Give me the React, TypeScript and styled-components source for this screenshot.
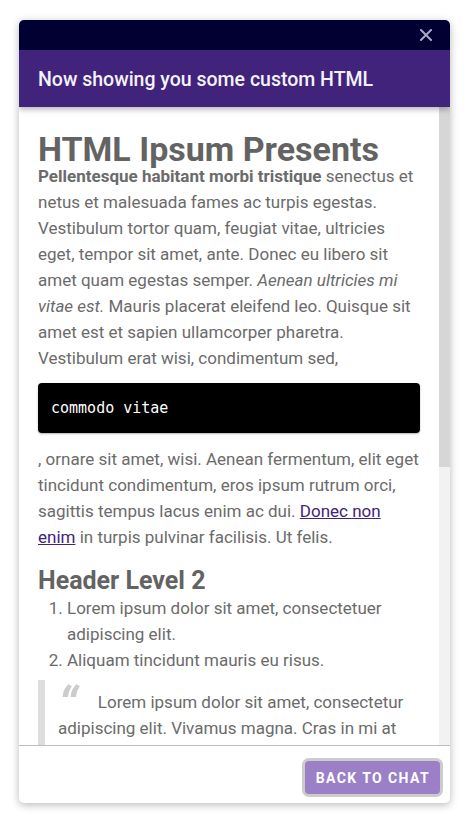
import * as React from "react";
import styled, { createGlobalStyle } from "styled-components";

const GlobalStyle = createGlobalStyle`
  html, body {
    margin: 0;
    padding: 0;
    background: #ffffff;
  }
  body {
    font-family: Roboto, "Liberation Sans", Arial, sans-serif;
  }
`;

// thumb size as the page's scroll ratio shows it
const thumbHeight = 360;

const App: React.FC = () => {
  return (
    <>
      <GlobalStyle />
      <Page>
        <Widget>
          <TopBar>
            <CloseButton aria-label="Close">
              <svg width="12" height="12" viewBox="0 0 12 12">
                <path
                  d="M1 1 L11 11 M11 1 L1 11"
                  stroke="#a9a9c4"
                  strokeWidth="2"
                  strokeLinecap="square"
                />
              </svg>
            </CloseButton>
          </TopBar>
          <Header>
            <Title>Now showing you some custom HTML</Title>
          </Header>
          <Body>
            <Content>
              <H1>HTML Ipsum Presents</H1>
              <P>
                <strong>Pellentesque habitant morbi tristique</strong> senectus
                et netus et malesuada fames ac turpis egestas. Vestibulum tortor
                quam, feugiat vitae, ultricies eget, tempor sit amet, ante. Donec
                eu libero sit amet quam egestas semper.{" "}
                <em>Aenean ultricies mi vitae est.</em> Mauris placerat eleifend
                leo. Quisque sit amet est et sapien ullamcorper pharetra.
                Vestibulum erat wisi, condimentum sed,
              </P>
              <Code>commodo vitae</Code>
              <P>
                , ornare sit amet, wisi. Aenean fermentum, elit eget tincidunt
                condimentum, eros ipsum rutrum orci, sagittis tempus lacus enim
                ac dui. <Link href="#">Donec non enim</Link> in turpis pulvinar
                facilisis. Ut felis.
              </P>
              <H2>Header Level 2</H2>
              <OrderedList>
                <li>Lorem ipsum dolor sit amet, consectetuer adipiscing elit.</li>
                <li>Aliquam tincidunt mauris eu risus.</li>
              </OrderedList>
              <Quote>
                <p>
                  Lorem ipsum dolor sit amet, consectetur adipiscing elit.
                  Vivamus magna. Cras in mi at felis aliquet congue. Ut a est
                  eget ligula molestie gravida. Curabitur massa. Donec eleifend,
                  libero at sagittis mollis, tellus est malesuada tellus, at
                  luctus turpis elit sit amet quam. Vivamus pretium ornare est.
                </p>
              </Quote>
              <H3>Header Level 3</H3>
              <BulletList>
                <li>Lorem ipsum dolor sit amet, consectetuer adipiscing elit.</li>
                <li>Aliquam tincidunt mauris eu risus.</li>
              </BulletList>
            </Content>
            <ScrollTrack>
              <ScrollThumb style={{ height: thumbHeight }} />
            </ScrollTrack>
          </Body>
          <Footer>
            <BackButton>Back to chat</BackButton>
          </Footer>
        </Widget>
      </Page>
    </>
  );
};

const Page = styled.div`
  padding: 20px 14px 13px 19px;
`;

const Widget = styled.div`
  width: 431px;
  height: 783px;
  display: flex;
  flex-direction: column;
  background: #ffffff;
  border-radius: 5px;
  overflow: hidden;
  box-shadow: 0 2px 8px rgba(0, 0, 0, 0.28);
`;

const TopBar = styled.div`
  height: 30px;
  flex: none;
  background: #000033;
  display: flex;
  align-items: center;
  justify-content: flex-end;
  padding-right: 18px;
`;

const CloseButton = styled.button`
  border: none;
  background: transparent;
  padding: 0;
  display: flex;
  cursor: pointer;
`;

const Header = styled.div`
  height: 57px;
  flex: none;
  background: #41237c;
  display: flex;
  align-items: center;
  padding: 0 19px;
  box-shadow: 0 3px 5px rgba(0, 0, 0, 0.25);
  position: relative;
  z-index: 1;
`;

const Title = styled.h2`
  margin: 0;
  color: #f4f2f8;
  font-size: 19.5px;
  font-weight: 500;
  padding-top: 1px;
`;

const Body = styled.div`
  flex: 1;
  min-height: 0;
  display: flex;
`;

const Content = styled.div`
  flex: 1;
  min-width: 0;
  overflow: hidden;
  padding: 28px 19px 20px 19px;
  color: #6b6b6b;
  font-size: 17px;
  font-weight: 400;
  line-height: 26px;

  strong {
    font-weight: 700;
  }
`;

const ScrollTrack = styled.div`
  width: 11px;
  flex: none;
  background: #f2f2f2;
`;

const ScrollThumb = styled.div`
  width: 100%;
  background: #d6d6d6;
`;

const H1 = styled.h1`
  margin: 0;
  font-size: 34px;
  line-height: 28px;
  font-weight: 700;
  color: #636363;
`;

const P = styled.p`
  margin: 0;
`;

const Code = styled.pre`
  margin: 12px 0 13px;
  background: #000000;
  color: #ffffff;
  border-radius: 4px;
  padding: 12px 13px;
  height: 26px;
  font-family: "DejaVu Sans Mono", "Liberation Mono", monospace;
  font-size: 15px;
  font-weight: 400;
  line-height: 26px;
  box-shadow: 0 1px 2px rgba(0, 0, 0, 0.3);
`;

const Link = styled.a`
  color: #41237c;
  text-decoration: underline;
`;

const H2 = styled.h2`
  margin: 17px 0 0;
  font-size: 25px;
  line-height: 28px;
  font-weight: 700;
  color: #636363;
`;

const H3 = styled.h3`
  margin: 16px 0 0;
  font-size: 21px;
  line-height: 26px;
  font-weight: 700;
  color: #636363;
`;

const OrderedList = styled.ol`
  margin: 0;
  padding-left: 29px;
`;

const BulletList = styled.ul`
  margin: 0;
  padding-left: 29px;
`;

const Quote = styled.blockquote`
  margin: 7px 0 0;
  border-left: 7px solid #dddddd;
  padding: 9px 0 4px 13px;

  p {
    margin: 0;
  }

  p::before {
    content: "\\201C";
    font-family: Roboto, "Liberation Sans", sans-serif;
    font-style: italic;
    font-weight: 700;
    font-size: 50px;
    color: #cccccc;
    line-height: 0;
    position: relative;
    top: 15px;
    margin-right: 20px;
  }
`;

const Footer = styled.div`
  flex: none;
  height: 58px;
  box-sizing: border-box;
  border-top: 1px solid #bdbdbd;
  display: flex;
  justify-content: flex-end;
  align-items: flex-start;
  padding: 12px 7px 0 0;
`;

const BackButton = styled.button`
  height: 39px;
  box-sizing: border-box;
  padding: 0 10px 0 11px;
  border: 3px solid #cccccc;
  border-radius: 7px;
  background: #9b7fc7;
  color: #ffffff;
  font-family: Roboto, "Liberation Sans", sans-serif;
  font-size: 14px;
  font-weight: 700;
  letter-spacing: 1.4px;
  text-transform: uppercase;
  cursor: pointer;
`;

export default App;
